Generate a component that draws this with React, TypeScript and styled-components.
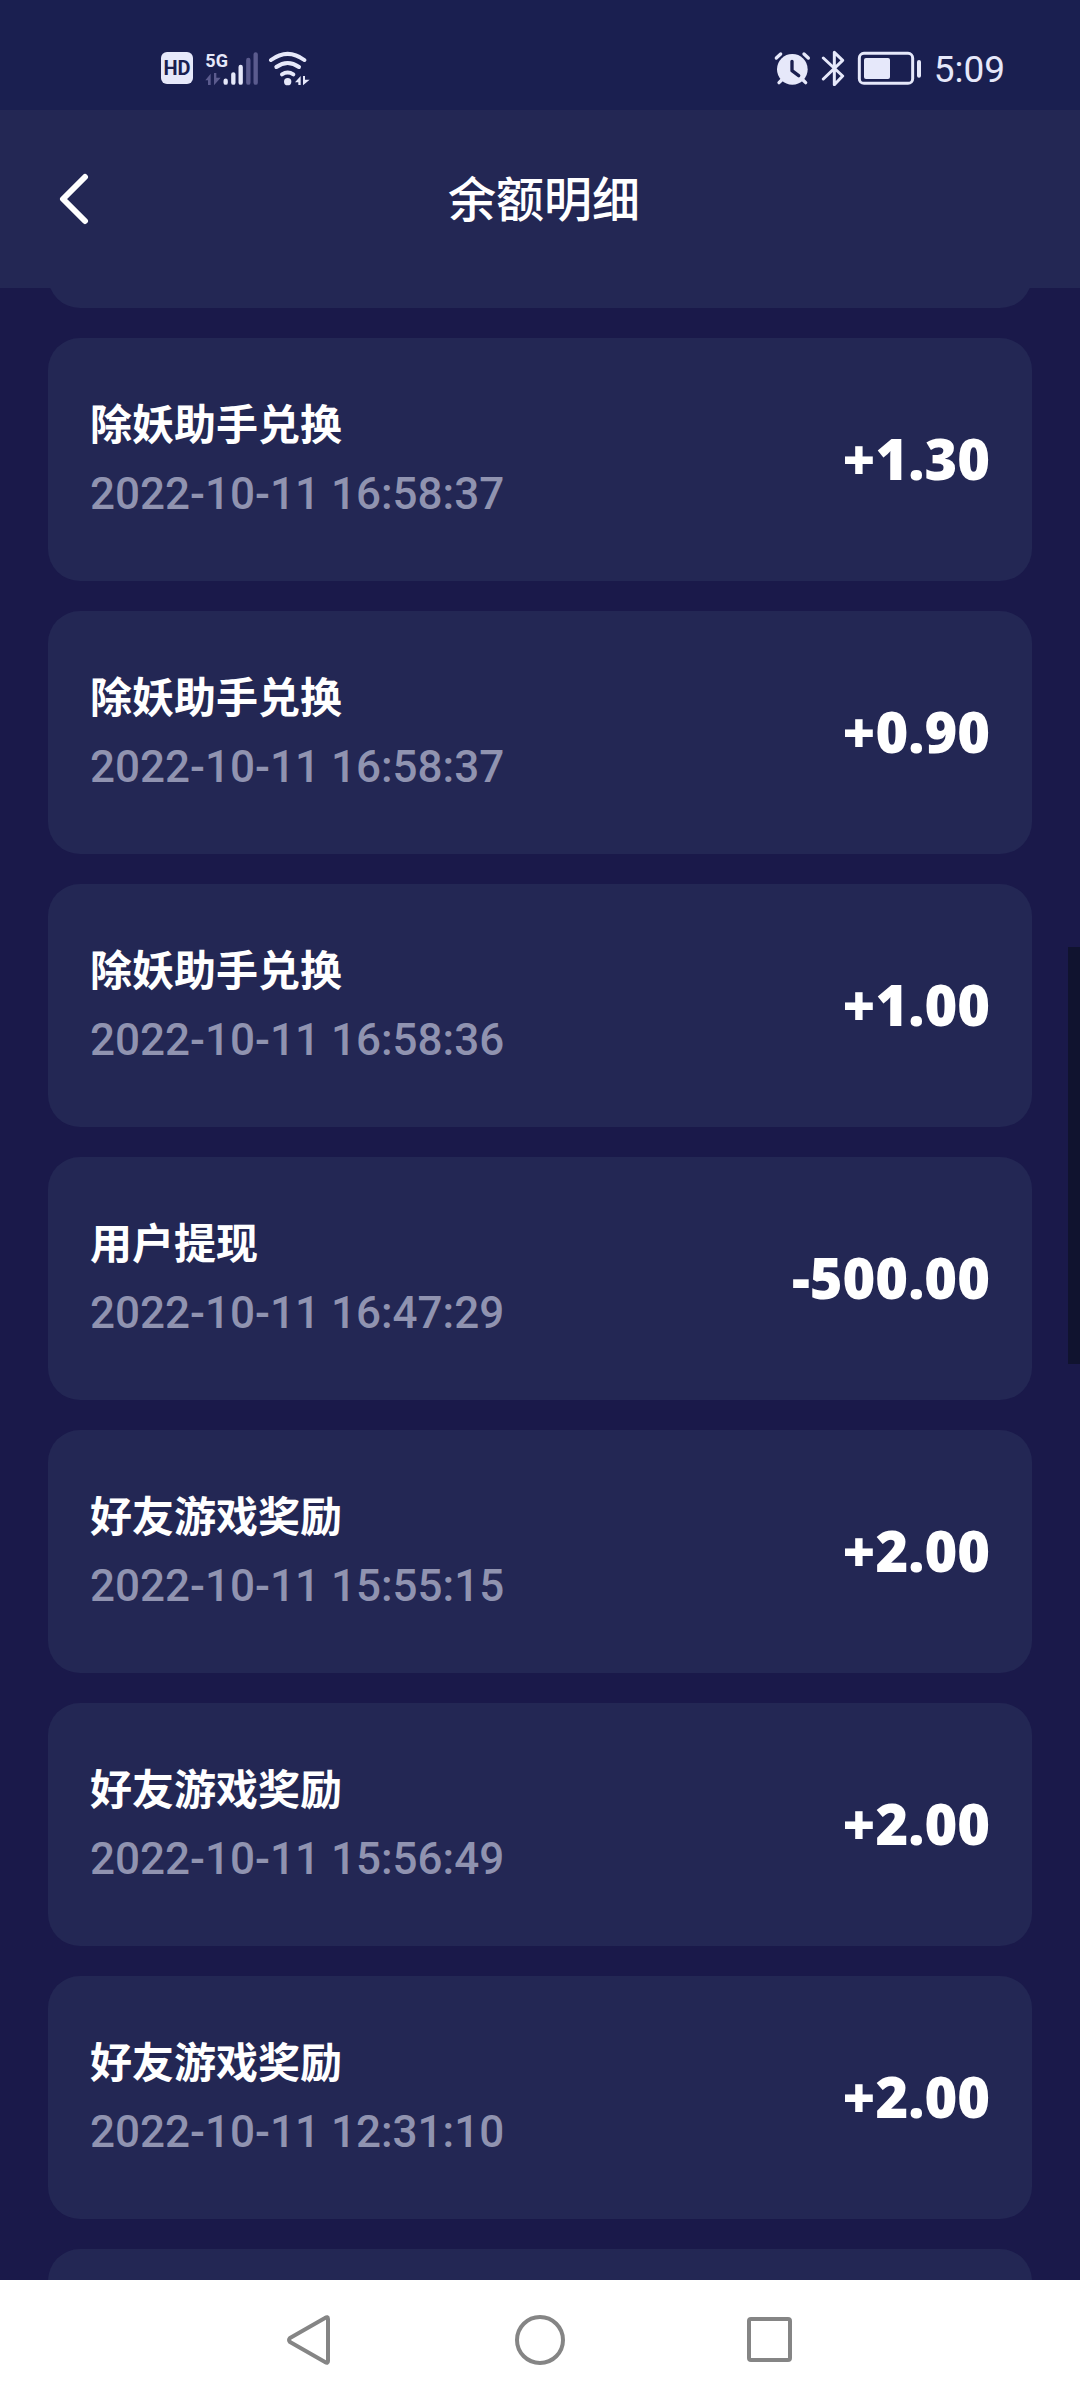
import React, { useLayoutEffect, useRef } from "react";
import styled, { createGlobalStyle } from "styled-components";

const GlobalStyle = createGlobalStyle`
  * { box-sizing: border-box; }
  body {
    margin: 0;
    background: #1a194a;
    font-family: Roboto, "Noto Sans CJK SC", sans-serif;
  }
`;

const Screen = styled.div`
  display: flex;
  flex-direction: column;
  height: 100vh;
  color: #ffffff;
`;

const StatusBar = styled.div`
  display: flex;
  align-items: center;
  justify-content: space-between;
  height: 110px;
  padding: 26px 75px 0 161px;
  background: #1a1f50;
  color: #e6e8fa;
`;

const StatusGroup = styled.div<{ $gap: number }>`
  display: flex;
  align-items: center;
  gap: ${(p) => p.$gap}px;
`;

const HdBadge = styled.span`
  width: 32px;
  height: 32px;
  border-radius: 6px;
  background: #e6e8fa;
  color: #1a1f50;
  font: bold 20px/32px "Liberation Sans Narrow", Roboto, sans-serif;
  text-align: center;
`;

const Time = styled.time`
  padding-top: 4px;
  font: 400 37px/44px Roboto, sans-serif;
`;

const Header = styled.header`
  display: grid;
  grid-template-columns: 80px 1fr 72px;
  align-items: center;
  height: 178px;
  padding: 0 34px;
  background: #232754;
`;

const IconButton = styled.button`
  display: flex;
  align-items: center;
  justify-content: center;
  height: 72px;
  padding: 0;
  border: 0;
  background: none;
  color: inherit;
`;

const Title = styled.h1`
  margin: 0;
  padding-bottom: 6px;
  font: 500 48px/64px "Noto Sans CJK SC", sans-serif;
  text-align: center;
`;

const Feed = styled.main`
  position: relative;
  flex: 1;
  min-height: 0;
`;

const Scroller = styled.div`
  height: 100%;
  overflow-y: auto;
  scrollbar-width: none;
`;

const List = styled.ul`
  display: flex;
  flex-direction: column;
  gap: 30px;
  margin: 0;
  padding: 0 48px;
  list-style: none;
`;

const Card = styled.li`
  display: flex;
  flex: none;
  align-items: center;
  justify-content: space-between;
  height: 243px;
  padding: 0 42px;
  border-radius: 32px;
  background: #232754;
`;

const Details = styled.div`
  display: flex;
  flex-direction: column;
  gap: 16px;
`;

const Name = styled.h2`
  margin: 0;
  font: 700 42px/52px "Noto Sans CJK SC", sans-serif;
`;

const Stamp = styled.time`
  color: #9093b0;
  font: 500 44px/60px Roboto, sans-serif;
`;

const Amount = styled.strong`
  padding-bottom: 4px;
  font: 800 56px/60px "Open Sans", sans-serif;
`;

const ScrollThumb = styled.div`
  position: absolute;
  top: 33.1%;
  right: 0;
  width: 12px;
  height: 20.9%;
  background: #10132f;
`;

const NavBar = styled.nav`
  display: flex;
  align-items: center;
  justify-content: center;
  gap: 178px;
  height: 120px;
  background: #ffffff;
  color: #858585;
`;

const NavButton = styled(IconButton)`
  width: 52px;
`;

const records = [
  { name: "除妖助手兑换", at: "2022-10-11 16:58:37", amount: "+1.30" },
  { name: "除妖助手兑换", at: "2022-10-11 16:58:37", amount: "+0.90" },
  { name: "除妖助手兑换", at: "2022-10-11 16:58:36", amount: "+1.00" },
  { name: "用户提现", at: "2022-10-11 16:47:29", amount: "-500.00" },
  { name: "好友游戏奖励", at: "2022-10-11 15:55:15", amount: "+2.00" },
  { name: "好友游戏奖励", at: "2022-10-11 15:56:49", amount: "+2.00" },
  { name: "好友游戏奖励", at: "2022-10-11 12:31:10", amount: "+2.00" },
];

const SignalIcon = () => (
  <svg width="59" height="36" viewBox="183 57 177 108" aria-hidden="true">
    <text x="196" y="107" fill="currentColor" fontFamily="Liberation Sans Narrow, Roboto, sans-serif" fontWeight="700" fontSize="54">5G</text>
    <g strokeWidth="13" strokeLinecap="round" stroke="currentColor">
      <path d="M257 149v6M280 130v25M302 108v47" />
      <path stroke="#5b5b8e" d="M325 87v68M347 70v85" />
    </g>
    <path fill="#5b5b8e" d="M196 148l16-20v34h-8v-14zM222 126h7v14h13l-20 23z" />
  </svg>
);

const WifiIcon = () => (
  <svg width="44" height="36" viewBox="384 57 132 108" aria-hidden="true">
    <g fill="none" stroke="currentColor" strokeWidth="12" strokeLinecap="round">
      <path d="M393 87Q443 50 493 87" />
      <path d="M409 108Q443 84 477 108" />
      <path d="M426 130Q443 119 460 130" />
    </g>
    <circle cx="443" cy="152" r="11" fill="currentColor" />
    <path fill="currentColor" d="M465 154l17-19v27h-7v-8zM489 135h6v11h14l-20 17z" />
  </svg>
);

const AlarmIcon = () => (
  <svg width="38" height="36" viewBox="42 60 114 108" aria-hidden="true">
    <circle cx="100" cy="118" r="46" fill="currentColor" />
    <g fill="none" stroke="currentColor" strokeWidth="10" strokeLinecap="round">
      <path d="M52 84l13-12M148 84l-13-12M68 150l-8 8M132 150l8 8" />
    </g>
    <path d="M99 94v28l20 15" fill="none" stroke="#1a1f50" strokeWidth="10" strokeLinecap="round" strokeLinejoin="round" />
  </svg>
);

const BluetoothIcon = () => (
  <svg width="24" height="36" viewBox="186 60 72 108" aria-hidden="true">
    <path d="M193 84l58 54-25 26V67l25 24-58 56" fill="none" stroke="currentColor" strokeWidth="9" strokeLinecap="round" strokeLinejoin="round" />
  </svg>
);

const BatteryIcon = () => (
  <svg width="69" height="36" viewBox="288 60 207 108" aria-hidden="true">
    <rect x="301" y="70" width="160" height="90" rx="14" fill="none" stroke="currentColor" strokeWidth="9" />
    <rect x="315" y="84" width="78" height="63" rx="6" fill="currentColor" />
    <rect x="474" y="90" width="12" height="53" rx="6" fill="currentColor" />
  </svg>
);

export default function App() {
  const scroller = useRef<HTMLDivElement>(null);

  // Open the feed part-way down, with the previous card just leaving the top.
  useLayoutEffect(() => {
    if (scroller.current) scroller.current.scrollTop = 223;
  }, []);

  return (
    <Screen>
      <GlobalStyle />
      <StatusBar>
        <StatusGroup $gap={8}>
          <HdBadge>HD</HdBadge>
          <SignalIcon />
          <WifiIcon />
        </StatusGroup>
        <StatusGroup $gap={10}>
          <AlarmIcon />
          <BluetoothIcon />
          <BatteryIcon />
          <Time>5:09</Time>
        </StatusGroup>
      </StatusBar>
      <Header>
        <IconButton type="button" aria-label="返回">
          <svg width="30" height="52" viewBox="0 0 30 52" aria-hidden="true">
            <path d="M26 4L4 26l22 22" fill="none" stroke="currentColor" strokeWidth="6" strokeLinecap="round" strokeLinejoin="round" />
          </svg>
        </IconButton>
        <Title>余额明细</Title>
      </Header>
      <Feed>
        <Scroller ref={scroller}>
          <List>
            <Card aria-hidden="true" />
            {records.map((record, index) => (
              <Card key={index}>
                <Details>
                  <Name>{record.name}</Name>
                  <Stamp>{record.at}</Stamp>
                </Details>
                <Amount>{record.amount}</Amount>
              </Card>
            ))}
            <Card aria-hidden="true" />
          </List>
        </Scroller>
        <ScrollThumb />
      </Feed>
      <NavBar>
        <NavButton type="button" aria-label="后退">
          <svg width="52" height="52" viewBox="0 0 52 52" fill="none" stroke="currentColor" strokeWidth="4" strokeLinejoin="round" aria-hidden="true">
            <path d="M41 4Q44 2 44 5V47Q44 50 41 48L6 28Q4 26 6 24Z" />
          </svg>
        </NavButton>
        <NavButton type="button" aria-label="主页">
          <svg width="52" height="52" viewBox="0 0 52 52" fill="none" stroke="currentColor" strokeWidth="4" aria-hidden="true">
            <circle cx="26" cy="26" r="23" />
          </svg>
        </NavButton>
        <NavButton type="button" aria-label="最近任务">
          <svg width="52" height="52" viewBox="0 0 52 52" fill="none" stroke="currentColor" strokeWidth="4" aria-hidden="true">
            <rect x="5" y="5" width="41" height="41" rx="2" />
          </svg>
        </NavButton>
      </NavBar>
    </Screen>
  );
}
